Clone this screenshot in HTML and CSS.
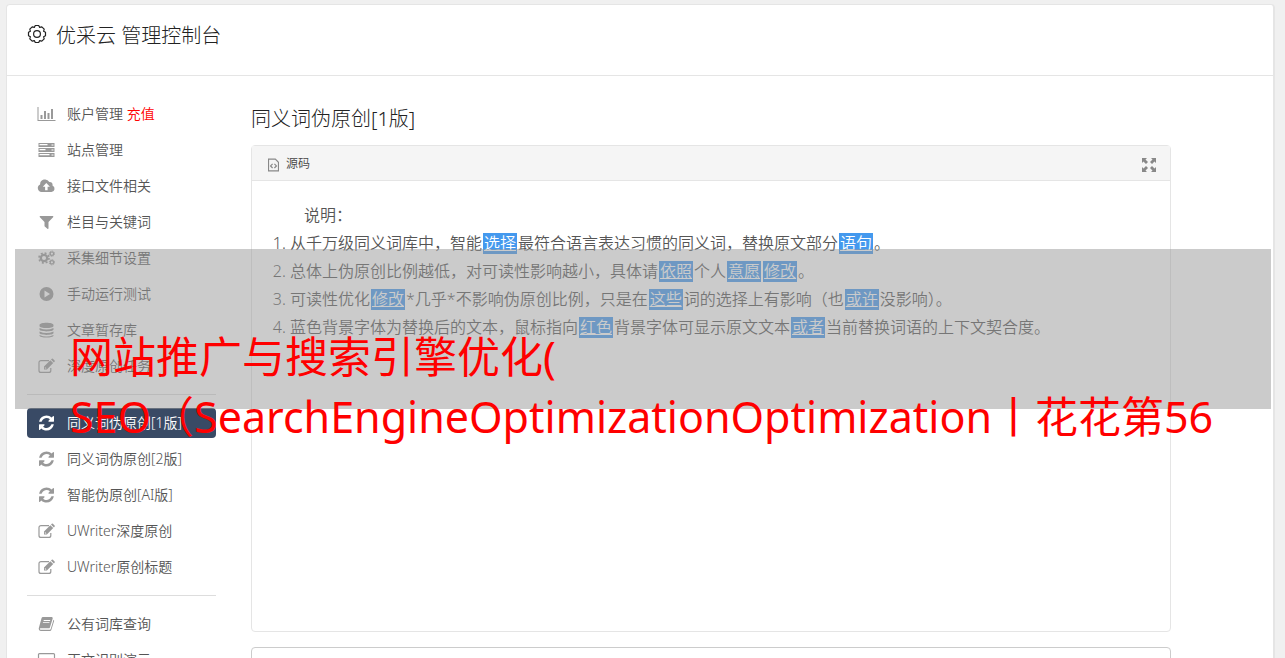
FILE: index.html
```
<!DOCTYPE html>
<html lang="zh-CN">
  <head>
    <meta charset="utf-8">
    <meta name="viewport" content="width=device-width, initial-scale=1">
    <title>优采云 管理控制台</title>
    <link rel="stylesheet" href="styles.css">
  </head>
  <body>
    <svg class="sprite" aria-hidden="true">
        <symbol id="chart" viewBox="0 0 18 16"><path d="M0 1h1v13h17v1H0zM3 9h2v4H3zM6.500 5h2v8h-2zM10 7h2v6h-2zM13.500 3h2v10h-2z"/></symbol>
        <symbol id="server" viewBox="0 0 18 16"><path fill-rule="evenodd" d="M1 1h16v4H1zm1 1v1.200h8V2zm12 .5v1h2v-1zM1 6h16v4H1zm1 1v1.200h6V7zm12 .5v1h2v-1zM1 11h16v4H1zm1 1v1.200h10V12zm12 .5v1h2v-1z"/></symbol>
        <symbol id="cloud" viewBox="0 0 18 16"><path fill-rule="evenodd" d="M4 14A4 4 0 0 1 2.600 6.400 4.900 4.900 0 0 1 11.800 4 2.800 2.800 0 0 1 15 7.500 3.400 3.400 0 0 1 14 14zM8.800 5L5.300 8.700h2.300v3.500h2.500V8.700h2.300z"/></symbol>
        <symbol id="filter" viewBox="0 0 18 16"><path d="M2.500 2h13q.7.500.1 1.200L11 8v6.600q-.4.700-1.100.2L7 12.300V8L2.400 3.200Q1.800 2.500 2.500 2z"/></symbol>
        <symbol id="cogs" viewBox="0 0 18 16">
            <circle cx="6.500" cy="8" r="3.200" fill="none" stroke="currentColor" stroke-width="2.300"/>
            <circle cx="6.500" cy="8" r="5" fill="none" stroke="currentColor" stroke-width="1.600" stroke-dasharray="2 1.927"/>
            <circle cx="14.400" cy="3.700" r="1.700" fill="none" stroke="currentColor" stroke-width="1.200"/>
            <circle cx="14.400" cy="3.700" r="2.600" fill="none" stroke="currentColor" stroke-dasharray="1.200 .842"/>
            <circle cx="14.400" cy="12.300" r="1.700" fill="none" stroke="currentColor" stroke-width="1.200"/>
            <circle cx="14.400" cy="12.300" r="2.600" fill="none" stroke="currentColor" stroke-dasharray="1.200 .842"/>
        </symbol>
        <symbol id="play" viewBox="0 0 18 16"><path fill-rule="evenodd" d="M9 1a7 7 0 1 1 0 14A7 7 0 0 1 9 1zM7 4.500v7L12.500 8z"/></symbol>
        <symbol id="database" viewBox="0 0 18 16"><path d="M2 3c0-3 14-3 14 0v1c0 2.700-14 2.700-14 0zM2 6q7 3 14 0v1.500c0 2.500-14 2.500-14 0zM2 9.500q7 3 14 0V11c0 2.500-14 2.500-14 0zM2 13q7 3 14 0v.5c0 2.700-14 2.700-14 0z"/></symbol>
        <symbol id="edit" viewBox="0 0 18 16">
            <path fill="none" stroke="currentColor" stroke-width="1.200" d="M11.500 2.600H3.500a2 2 0 0 0-2 2v7.800a2 2 0 0 0 2 2h7.800a2 2 0 0 0 2-2V10"/>
            <path fill-rule="evenodd" d="M6.500 8.500l6.300-6.300 2.900 2.900-6.300 6.300H6.500zM13.500 1.500l.8-.8q.6-.4 1.100.1l1.700 1.700q.5.500.1 1.100l-.8.800zM7.400 9v1.500h1.700z"/>
        </symbol>
        <symbol id="refresh" viewBox="-50 -50 1636 1636"><path d="M1511 928q0 5-1 7-64 268-268 434.500t-478 166.500q-146 0-282.500-55t-243.500-157l-129 129q-19 19-45 19t-45-19-19-45v-448q0-26 19-45t45-19h448q26 0 45 19t19 45-19 45l-137 137q71 66 161 102t187 36q134 0 250-65t186-179q11-17 53-117 8-23 30-23h192q13 0 22.500 9.500t9.500 22.500zm25-800v448q0 26-19 45t-45 19h-448q-26 0-45-19t-19-45 19-45l138-138q-148-137-349-137-134 0-250 65t-186 179q-11 17-53 117-8 23-30 23h-199q-13 0-22.500-9.500t-9.500-22.500v-7q65-268 270-434.500t480-166.500q146 0 284 55.500t245 156.500l130-129q19-19 45-19t45 19 19 45z"/></symbol>
        <symbol id="book" viewBox="0 0 18 16"><path fill-rule="evenodd" d="M5.500 1h8.800q1.200.2.900 1.400l-2.800 9q-.3.900-1.200.9H3q-.9.200-.5.900.3.500 1 .500h8.800q.7 0 1-.9L16 3.800q.8.400.6 1.200l-2.800 9q-.3 1-1.300 1H3.200Q1 14.700 1.200 12.500L4 2.300Q4.300 1 5.500 1zM6.300 4l-.3.900h6.500l.3-.9zm-.7 2.200-.3.900h6.500l.3-.9z"/></symbol>
        <symbol id="monitor" viewBox="0 0 18 16"><path fill="none" stroke="currentColor" stroke-width="1.200" d="M2 1.600h14q1 0 1 1v8.800q0 1-1 1H2q-1 0-1-1V2.600q0-1 1-1zM6 15h6M9 12v3"/></symbol>
        <symbol id="gear" viewBox="0 0 20 20"><g fill="none" stroke="currentColor" stroke-width="1.200"><path d="M16.600 7.300L18.500 8.300V11.700L16.600 12.700 17.200 14.800 14.800 17.200 12.700 16.600 11.700 18.500H8.300L7.300 16.600 5.200 17.200 2.800 14.800 3.400 12.700 1.500 11.700V8.300L3.400 7.300 2.800 5.200 5.200 2.800 7.300 3.400 8.300 1.500H11.700L12.700 3.400 14.800 2.800 17.200 5.200z" stroke-linejoin="round"/><circle cx="10" cy="10" r="3.400"/></g></symbol>
        <symbol id="code" viewBox="0 0 12 14"><g fill="none" stroke="currentColor"><path stroke-width="1.200" d="M.6.600h7.400l3.400 3.400v9.400H.6z"/><path stroke-width="1.300" d="M5 5.700 2.800 8 5 10.300M7 5.700 9.200 8 7 10.300"/></g></symbol>
        <symbol id="expand" viewBox="0 0 14 14"><path d="M0 0h5L3.500 1.500 6 4 4 6 1.500 3.500 0 5zM14 0v5l-1.500-1.500L10 6 8 4l2.500-2.500L9 0zM0 14V9l1.500 1.500L4 8l2 2-2.500 2.500L5 14zM14 14H9l1.500-1.500L8 10l2-2 2.500 2.500L14 9z"/></symbol>
    </svg>
    <div class="card">
        <header class="top">
            <svg class="gear"><use href="#gear"/></svg>
            <h1>优采云 管理控制台</h1>
        </header>
        <div class="content">
            <nav class="menu">
                <ul>
                    <li><a href="#"><svg><use href="#chart"/></svg><span>账户管理 <em>充值</em></span></a></li>
                    <li><a href="#"><svg><use href="#server"/></svg>站点管理</a></li>
                    <li><a href="#"><svg><use href="#cloud"/></svg>接口文件相关</a></li>
                    <li><a href="#"><svg><use href="#filter"/></svg>栏目与关键词</a></li>
                    <li><a href="#"><svg><use href="#cogs"/></svg>采集细节设置</a></li>
                    <li><a href="#"><svg><use href="#play"/></svg>手动运行测试</a></li>
                    <li><a href="#"><svg><use href="#database"/></svg>文章暂存库</a></li>
                    <li><a href="#"><svg><use href="#edit"/></svg>深度原创任务</a></li>
                </ul>
                <hr>
                <ul>
                    <li><a href="#" class="active"><svg><use href="#refresh"/></svg>同义词伪原创[1版]</a></li>
                    <li><a href="#"><svg><use href="#refresh"/></svg>同义词伪原创[2版]</a></li>
                    <li><a href="#"><svg><use href="#refresh"/></svg>智能伪原创[AI版]</a></li>
                    <li><a href="#"><svg><use href="#edit"/></svg>UWriter深度原创</a></li>
                    <li><a href="#"><svg><use href="#edit"/></svg>UWriter原创标题</a></li>
                </ul>
                <hr>
                <ul>
                    <li><a href="#"><svg><use href="#book"/></svg>公有词库查询</a></li>
                    <li><a href="#"><svg><use href="#monitor"/></svg>正文识别演示</a></li>
                </ul>
            </nav>
            <main class="main">
                <h2>同义词伪原创[1版]</h2>
                <div class="editor">
                    <div class="toolbar">
                        <button type="button" class="source"><svg><use href="#code"/></svg>源码</button>
                        <button type="button" class="expand" aria-label="全屏"><svg><use href="#expand"/></svg></button>
                    </div>
                    <div class="text">
                        <p>说明：</p>
                        <ol>
                            <li>从千万级同义词库中，智能<u>选择</u>最符合语言表达习惯的同义词，替换原文部分<u>语句</u>。</li>
                            <li>总体上伪原创比例越低，对可读性影响越小，具体请<u>依照</u>个人<u>意愿</u><u>修改</u>。</li>
                            <li>可读性优化<u>修改</u>*几乎*不影响伪原创比例，只是在<u>这些</u>词的选择上有影响（也<u>或许</u>没影响）。</li>
                            <li>蓝色背景字体为替换后的文本，鼠标指向<u>红色</u>背景字体可显示原文文本<u>或者</u>当前替换词语的上下文契合度。</li>
                        </ol>
                    </div>
                </div>
                <textarea class="result" aria-label="结果"></textarea>
            </main>
        </div>
    </div>
    <div class="banner">
        <p>网站推广与搜索引擎优化(</p>
        <p>SEO（SearchEngineOptimizationOptimization丨花花第56</p>
    </div>
  </body>
</html>
```
FILE: styles.css
```
* {
    box-sizing: border-box;
}
body {
    margin: 0;
    padding: 4px 10px 0 6px;
    height: 100vh;
    overflow: hidden;
    position: relative;
    background-color: #f0f0f0;
    color: #555;
    font-family: "Noto Sans", "Noto Sans CJK SC", sans-serif;
    font-size: 14px;
    font-weight: 350;
}
h1, h2, p, ul, ol {
    margin: 0;
    padding: 0;
    font-weight: inherit;
}
svg {
    fill: currentColor;
}
.sprite {
    position: absolute;
    width: 0;
    height: 0;
}
.card {
    background-color: #fff;
    border: 1px solid #e5e5e5;
    border-right-width: 2px;
    border-radius: 4px;
}
.top {
    display: flex;
    gap: 9px;
    height: 71px;
    padding: 16px 20px;
    border-bottom: 1px solid #e5e5e5;
    color: #222;
}
.top h1 {
    font-size: 20px;
    font-weight: 300;
    line-height: 30px;
}
.gear {
    width: 20px;
    height: 20px;
    margin-top: 3px;
}
.content {
    display: flex;
    gap: 35px;
    padding: 23px 20px;
}
.menu {
    width: 189px;
    flex-shrink: 0;
}
.menu ul {
    list-style: none;
}
.menu li {
    margin-bottom: 6px;
}
.menu a {
    display: flex;
    align-items: center;
    gap: 11px;
    height: 30px;
    padding: 0 10px 3px;
    border-radius: 4px;
    color: #555;
    text-decoration: none;
}
.menu svg {
    width: 19px;
    height: 16px;
    margin-top: 2px;
    color: #999;
}
.menu em {
    color: #f00;
    font-style: normal;
}
.menu .active,
.menu .active svg {
    background-color: #394a65;
    color: #fff;
}
.menu hr {
    height: 1px;
    margin: 13px 0;
    border: 0;
    background-color: #ddd;
}
.main {
    flex: 1;
    max-width: 920px;
}
.main h2 {
    margin-bottom: 11px;
    padding-top: 5px;
    font-size: 20px;
    font-weight: 300;
    line-height: 30px;
    color: #222;
}
.editor {
    height: 487px;
    border: 1px solid #e5e5e5;
    border-radius: 4px;
}
.toolbar {
    display: flex;
    justify-content: space-between;
    align-items: center;
    height: 35px;
    padding: 0 14px 0 16px;
    border-bottom: 1px solid #e5e5e5;
    background-color: #f5f5f5;
}
.toolbar button {
    display: flex;
    align-items: center;
    gap: 7px;
    padding: 0;
    border: 0;
    background: none;
    font-family: inherit;
    font-size: 12px;
    font-weight: inherit;
    color: #444;
    cursor: pointer;
}
.toolbar svg {
    width: 14px;
    height: 14px;
    margin-top: 3px;
    color: #888;
}
.toolbar .source svg {
    width: 11px;
}
.text {
    padding: 20px;
    font-size: 16px;
    line-height: 28px;
}
.text p {
    text-indent: 2em;
}
.text ol {
    padding-left: 18px;
}
.text u {
    display: inline-block;
    margin: 0 1px;
    padding: 0 1px;
    line-height: 21px;
    background-color: #4499ee;
    color: #fff;
}
.result {
    display: block;
    width: 100%;
    height: 120px;
    margin-top: 15px;
    border: 1px solid #ccc;
    border-radius: 4px;
    resize: none;
}
.banner {
    position: absolute;
    top: 249px;
    left: 15px;
    right: 14px;
    height: 160px;
    padding: 78px 0 0 55px;
    background-color: rgba(152,152,152,0.5);
    color: #f00;
    font-size: 43px;
    font-weight: 400;
    line-height: 60px;
    white-space: nowrap;
}
```
